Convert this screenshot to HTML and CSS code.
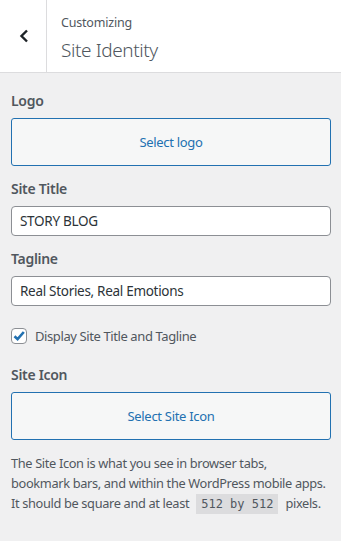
FILE: index.html
```html
<!DOCTYPE html>
<html lang="en">
<head>
  <meta charset="UTF-8" />
  <meta name="viewport" content="width=device-width, initial-scale=1.0"/>
  <title>Site Identity</title>
  <link rel="stylesheet" href="styles.css">
</head>
<body>

  <header class="panel-head">
    <button class="back" aria-label="Back">
      <svg width="10" height="14" viewBox="0 0 10 14"><path d="M8 1.5 L2.5 7 L8 12.5" fill="none" stroke="#1d2327" stroke-width="2.4"/></svg>
    </button>
    <div class="head-title">
      <span class="crumb">Customizing</span>
      <h1>Site Identity</h1>
    </div>
  </header>

  <main class="controls">
    <div class="control">
      <span class="label">Logo</span>
      <button class="select-btn">Select logo</button>
    </div>

    <div class="control">
      <label class="label" for="blogname">Site Title</label>
      <input id="blogname" class="field" type="text" value="STORY BLOG">
    </div>

    <div class="control">
      <label class="label" for="tagline">Tagline</label>
      <input id="tagline" class="field" type="text" value="Real Stories, Real Emotions">
    </div>

    <label class="check-row">
      <span class="box">
        <svg width="14" height="14" viewBox="0 0 14 14"><path d="M2.5 7.2 L5.6 10.2 L11.8 3" fill="none" stroke="#2271b1" stroke-width="2.6"/></svg>
      </span>
      Display Site Title and Tagline
    </label>

    <div class="control">
      <span class="label">Site Icon</span>
      <button class="select-btn">Select Site Icon</button>
      <p class="desc">The Site Icon is what you see in browser tabs,<br>bookmark bars, and within the WordPress mobile apps.<br>It should be square and at least <code>512 by 512</code> pixels.</p>
    </div>
  </main>

</body>
</html>
```

FILE: styles.css
```css
body {
  margin: 0;
  font-family: 'Noto Sans', sans-serif;
  font-size: 13px;
  letter-spacing: -0.4px;
  color: #50575e;
  background: #f0f0f1;
}

.panel-head {
  display: flex;
  height: 72px;
  background: #fff;
  border-bottom: 1px solid #dcdcde;
}

.back {
  width: 47px;
  border: none;
  border-right: 1px solid #dcdcde;
  background: #fff;
  padding: 0 0 0 2px;
  display: flex;
  align-items: center;
  justify-content: center;
}

.head-title {
  display: flex;
  flex-direction: column;
  padding: 14px 14px 0;
}

.crumb {
  font-size: 12.5px;
  letter-spacing: -0.2px;
  line-height: 18px;
}

.head-title h1 {
  margin: 5px 0 0;
  font-size: 19px;
  font-weight: 300;
  letter-spacing: -0.4px;
  line-height: 26px;
}

.controls {
  padding: 18px 10px 0 11px;
}

.control {
  display: flex;
  flex-direction: column;
  margin-bottom: 13px;
}

.label {
  font-size: 14px;
  font-weight: 600;
  letter-spacing: -0.3px;
  line-height: 20px;
  margin-bottom: 7px;
}

.select-btn {
  height: 48px;
  border: 1px solid #2271b1;
  border-radius: 3px;
  background: #f6f7f7;
  color: #2271b1;
  font-family: inherit;
  font-size: 13px;
  letter-spacing: -0.3px;
}

.field {
  height: 30px;
  box-sizing: border-box;
  border: 1px solid #8c8f94;
  border-radius: 4px;
  background: #fff;
  padding: 0 8px;
  font-family: inherit;
  font-size: 13.5px;
  letter-spacing: -0.3px;
  color: #2c3338;
}

.check-row {
  display: flex;
  align-items: center;
  gap: 8px;
  margin: 20px 0 19px;
  line-height: 20px;
}

.box {
  width: 16px;
  height: 16px;
  box-sizing: border-box;
  border: 1px solid #8c8f94;
  border-radius: 4px;
  background: #fff;
  display: flex;
  align-items: center;
  justify-content: center;
}

.desc {
  margin: 13px 0 0;
  font-size: 12.8px;
  letter-spacing: -0.35px;
  line-height: 20px;
  white-space: nowrap;
}

code {
  font-family: 'DejaVu Sans Mono', monospace;
  font-size: 12px;
  letter-spacing: 0;
  background: #dcdcde;
  padding: 3px 5px;
  margin: 0 4px;
}
```
